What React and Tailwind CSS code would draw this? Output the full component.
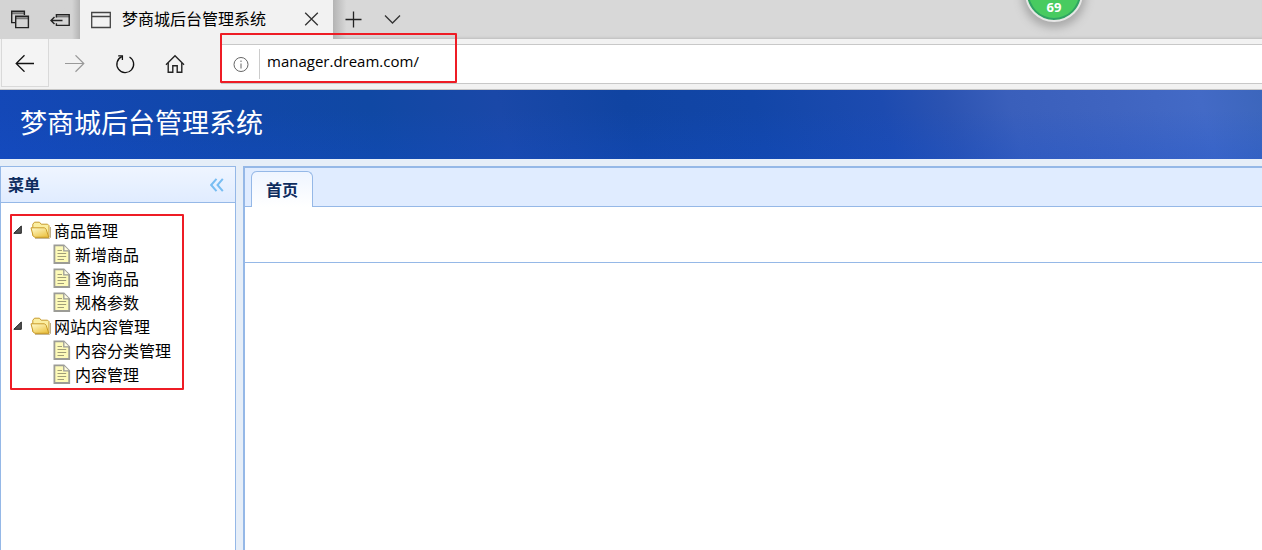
import React, { useState } from 'react';

const menu = [
  { title: '商品管理', children: ['新增商品', '查询商品', '规格参数'] },
  { title: '网站内容管理', children: ['内容分类管理', '内容管理'] },
];

const TabsAsideIcon = () => (
  <svg width="20" height="20" viewBox="0 0 20 20" fill="none" stroke="#222" strokeWidth="1.4">
    <path d="M1.6 3.2H14.4M6 8.2H18.4" stroke="#777" strokeWidth="2" />
    <path d="M5 12.6H1.7V1.2H14.4V5" />
    <path d="M5.7 6.2H18.4V17.6H5.7Z" />
  </svg>
);

const SetAsideIcon = () => (
  <svg width="20" height="16" viewBox="0 0 20 16" fill="none" stroke="#222" strokeWidth="1.4">
    <path d="M6.4 4.4H19.2" stroke="#777" strokeWidth="2" />
    <path d="M6.4 5.5V2.6H19.2V13.4H6.4V11.2" />
    <path d="M1 8.5H12.5M4.5 5L1 8.5L4.5 12" />
  </svg>
);

const WindowIcon = () => (
  <svg width="20" height="18" viewBox="0 0 20 18" fill="none" stroke="#444" strokeWidth="1.3">
    <path d="M.7 1.5H19.3V16.5H.7ZM.7 5.5H19.3" />
  </svg>
);

const BackIcon = () => (
  <svg width="20" height="18" viewBox="0 0 20 18" fill="none" stroke="#111" strokeWidth="1.3">
    <path d="M19 9.5H1M9.5 1.3L1.2 9.5L9.5 17.7" />
  </svg>
);

const ForwardIcon = () => (
  <svg width="20" height="18" viewBox="0 0 20 18" fill="none" stroke="#999" strokeWidth="1.2">
    <path d="M0 8.5H19M10.5 .3L18.8 8.5L10.5 16.7" />
  </svg>
);

const RefreshIcon = () => (
  <svg width="20" height="20" viewBox="0 0 20 20" fill="none" stroke="#111" strokeWidth="1.3">
    <path d="M14.5 3A8.4 8.4 0 1 1 6.8 2.6" />
    <path d="M3.2 1.8H7.4V6" />
  </svg>
);

const HomeIcon = () => (
  <svg width="20" height="20" viewBox="0 0 20 20" fill="none" stroke="#222" strokeWidth="1.4">
    <path d="M1 10.8L10 1.8L19 10.8" />
    <path d="M3.2 9V18.2H7.8V11.8H12.2V18.2H16.8V9" />
  </svg>
);

const InfoIcon = () => (
  <svg width="16" height="16" viewBox="0 0 16 16" fill="none" stroke="#666" strokeWidth="1">
    <circle cx="8" cy="8.5" r="7" />
    <path d="M8 7.5V12.5M8 4.5V6" />
  </svg>
);

const CollapseIcon = () => (
  <svg width="14" height="14" viewBox="0 0 14 14" fill="none" stroke="#78bdf2" strokeWidth="2">
    <path d="M6.5 .8L1.2 7L6.5 13.2M12.8 .8L7.5 7L12.8 13.2" />
  </svg>
);

const ArrowIcon = ({ open }) => (
  <svg className={open ? '' : '-rotate-45'} width="10" height="10" viewBox="0 0 10 10">
    <path d="M8.3 1V8.3H.8Z" fill="#555" stroke="#222" strokeWidth="1" strokeLinejoin="round" />
  </svg>
);

const FolderIcon = () => (
  <svg width="22" height="18" viewBox="0 0 22 18">
    <defs>
      <linearGradient id="folder" x1="0" y1="0" x2="0.7" y2="1">
        <stop offset="0" stopColor="#fffcd0" />
        <stop offset="1" stopColor="#edc548" />
      </linearGradient>
    </defs>
    <path d="M5 17.3H19.6L20.4 16.5V6" fill="none" stroke="#b9a77c" strokeWidth="1" />
    <path d="M2.8 14.5V3.2L4.5 1.2H9.5L11.2 3.2H17.6L19 4.6V16.2H6Z" fill="#fbeea0" stroke="#c79a2c" strokeLinejoin="round" />
    <path d="M1 6.8H14.6L16.2 8.4L18.8 16.3H4.6L3 14.6Z" fill="url(#folder)" stroke="#c99b2a" strokeLinejoin="round" />
  </svg>
);

const FileIcon = () => (
  <svg width="18" height="20" viewBox="0 0 18 20">
    <path d="M1.4 1.4H10.8L16.2 6.8V19H1.4Z" fill="#fdfab8" stroke="#9c9c96" strokeWidth="1.8" />
    <path d="M10.8 1.4V6.8H16.2" fill="#fffde0" stroke="#9c9c96" strokeWidth="1.3" />
    <path d="M4.5 6.5H9M4.5 9.5H13.2M4.5 12.5H13.2M4.5 15.5H11" stroke="#a09d78" strokeWidth="1.2" />
  </svg>
);

const BrowserTabs = () => (
  <div className="relative flex h-[39px] overflow-hidden bg-[#d8d8d8] shadow-[inset_0_-3px_3px_-2px_#bcbcbc]">
    <div className="flex w-20 items-center justify-between bg-linear-to-r from-[#d4d4d4] from-90% to-[#b4b4b4] px-[10px]">
      <button aria-label="Tabs aside"><TabsAsideIcon /></button>
      <button aria-label="Set tabs aside"><SetAsideIcon /></button>
    </div>
    <div className="flex w-[253px] items-center gap-[11px] bg-[#f2f2f2] pr-[14px] pl-[11px]">
      <WindowIcon />
      <span className="flex-1 pb-1 whitespace-nowrap">梦商城后台管理系统</span>
      <button aria-label="Close tab">
        <svg width="15" height="15" viewBox="0 0 15 15" stroke="#333" strokeWidth="1.3">
          <path d="M1.2 .7L13.8 13.3M13.8 .7L1.2 13.3" />
        </svg>
      </button>
    </div>
    <div className="flex items-center gap-[22px] bg-linear-to-r from-[#b4b4b4] to-transparent to-20% pl-3">
      <button aria-label="New tab">
        <svg width="17" height="17" viewBox="0 0 17 17" stroke="#222" strokeWidth="1.3">
          <path d="M.5 8.5H16.5M8.5 .5V16.5" />
        </svg>
      </button>
      <button aria-label="Tab previews">
        <svg width="17" height="10" viewBox="0 0 17 10" fill="none" stroke="#333" strokeWidth="1.3">
          <path d="M1 .5L8.5 8L16 .5" />
        </svg>
      </button>
    </div>
    <div className="absolute -top-9 right-[179px] flex size-[58px] items-end justify-center rounded-full border-2 border-[#e6e6e6] bg-[#48cb60] pb-[7px] font-['Noto_Sans',sans-serif] text-[13px] leading-3 font-bold text-white shadow-[0_3px_8px_3px_#aaaaaa,inset_0_0_0_2px_#30a264]">
      69
    </div>
  </div>
);

const Toolbar = () => {
  const [url, setUrl] = useState('manager.dream.com/');

  return (
    <div className="flex h-[51px] border-b border-[#c6c6c6] bg-[#f2f2f2]">
      <div className="flex w-[221px] shrink-0">
        <button aria-label="Back" className="ml-px flex h-12 w-12 items-center justify-center border-r border-b border-l border-[#d9d9d9] bg-[#f4f4f4]"><BackIcon /></button>
        <button aria-label="Forward" className="flex h-[50px] w-[51px] items-center justify-center"><ForwardIcon /></button>
        <button aria-label="Refresh" className="flex h-[50px] w-[50px] items-center justify-center"><RefreshIcon /></button>
        <button aria-label="Home" className="flex h-[50px] w-[50px] items-center justify-center"><HomeIcon /></button>
      </div>
      <div className="relative mt-[5px] flex h-10 flex-1 items-center border-y border-[#c8c8c8] bg-white pl-3">
        <InfoIcon />
        <div className="ml-[10px] h-[30px] w-px bg-[#ccc]" />
        <input
          aria-label="Address"
          className="h-full flex-1 bg-transparent pb-[6px] pl-[7px] font-['Open_Sans',sans-serif] text-[15px] text-black outline-none"
          value={url}
          onChange={(e) => setUrl(e.target.value)}
        />
        <div className="pointer-events-none absolute -top-3 -left-px h-[50px] w-[237px] rounded-[1px] border-2 border-[#ee1c25]" />
      </div>
    </div>
  );
};

const Banner = () => (
  <header className="flex h-[69px] items-center bg-[linear-gradient(to_top,#1450d040,transparent_70%),linear-gradient(75deg,#1448b8_0%,#1147a8_20%,#1048a4_30%,#1a48a8_40%,#1044a2_50%,#1246a8_60%,#1d4bb0_70%,#2b53b2_75%,#3a5fbb_80%,#3f64c0_88%,#436ac6_95%,#3c66bc_100%)] pb-[6px] pl-5">
    <h1 className="text-[27px] leading-9 text-white">梦商城后台管理系统</h1>
  </header>
);

const TreeNode = ({ node }) => {
  const [open, setOpen] = useState(true);

  return (
    <li>
      <button className="flex h-6 items-center" onClick={() => setOpen(!open)}>
        <ArrowIcon open={open} />
        <span className="mr-[2px] ml-[7px]"><FolderIcon /></span>
        {node.title}
      </button>
      {open && (
        <ul>
          {node.children.map((child) => (
            <li key={child}>
              <a href="#" className="flex h-6 items-center gap-1 pl-10">
                <FileIcon />
                {child}
              </a>
            </li>
          ))}
        </ul>
      )}
    </li>
  );
};

const Sidebar = () => (
  <aside className="w-[236px] shrink-0 border border-b-0 border-[#95b8e7] bg-white">
    <div className="flex h-9 items-center justify-between border-b border-[#95b8e7] bg-linear-to-b from-[#eff5ff] to-[#e0ecff] pr-[11px] pl-[7px]">
      <h2 className="pb-[2px] font-bold text-[#0e2d5f]">菜单</h2>
      <button aria-label="Collapse menu"><CollapseIcon /></button>
    </div>
    <ul className="mt-[11px] ml-[9px] w-[174px] rounded-[1px] border-2 border-[#ee1c25] pt-[2px] pb-[2px] pl-px">
      {menu.map((node) => (
        <TreeNode key={node.title} node={node} />
      ))}
    </ul>
  </aside>
);

const Content = () => (
  <main className="flex-1 border-t-2 border-l-2 border-[#95b8e7] bg-white">
    <div role="tablist" className="flex h-[39px] items-end border-b border-[#95b8e7] bg-[#e0ecff] pl-[6px]">
      <button
        role="tab"
        aria-selected="true"
        className="-mb-px h-9 w-[62px] rounded-t-md border border-b-0 border-[#95b8e7] bg-linear-to-b from-[#eff5ff] to-white pb-[2px] font-bold text-[#0e2d5f]"
      >
        首页
      </button>
    </div>
    <div role="tabpanel" className="h-14 border-b border-[#95b8e7]" />
  </main>
);

const App = () => {
  return (
    <div className="flex min-h-screen flex-col bg-white font-['Noto_Sans_CJK_SC',sans-serif] text-base leading-6 text-black">
      <BrowserTabs />
      <Toolbar />
      <Banner />
      <div className="flex flex-1 gap-[7px] bg-[#e6eef8] pt-[7px]">
        <Sidebar />
        <Content />
      </div>
    </div>
  );
};

export default App;
